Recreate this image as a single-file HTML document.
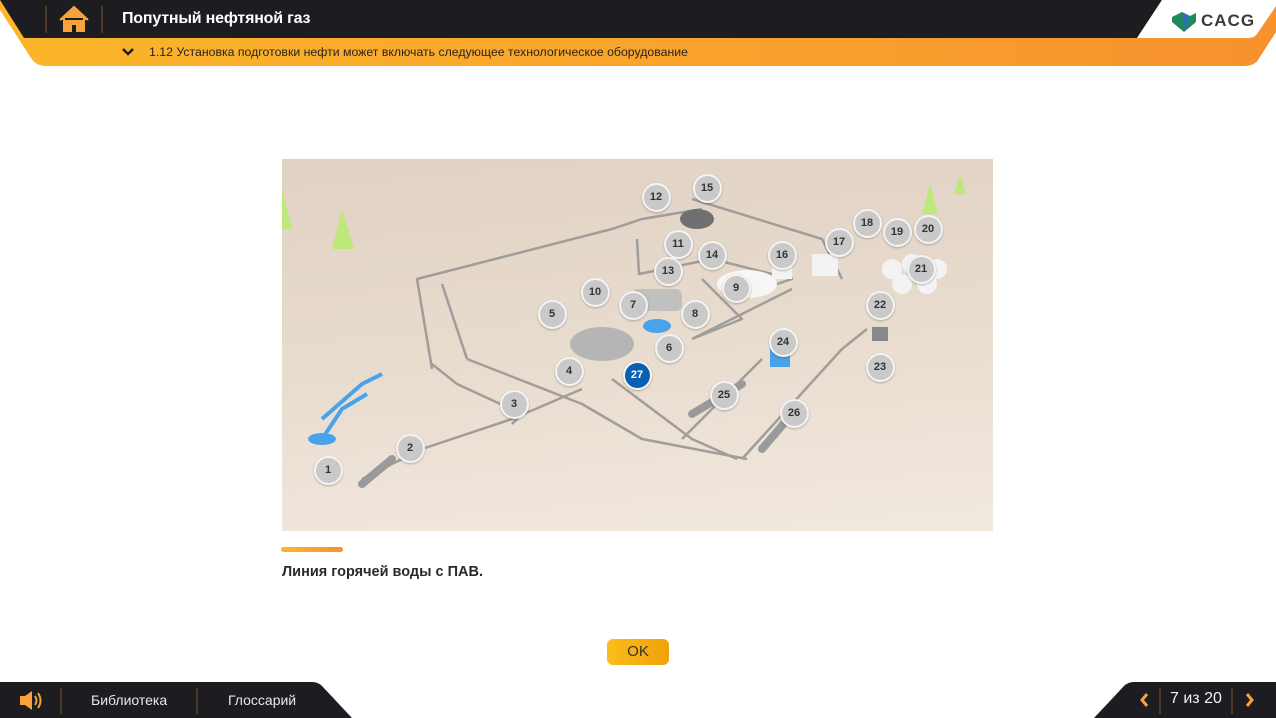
<!DOCTYPE html>
<html><head><meta charset="utf-8"><style>
*{margin:0;padding:0;box-sizing:border-box}
body{width:1276px;height:718px;overflow:hidden;background:#fff;font-family:"Liberation Sans",sans-serif;position:relative}
.a{position:absolute}
.c{position:absolute;width:29px;height:29px;margin:-14.5px 0 0 -14.5px;border-radius:50%;background:#c9c9c9;border:2px solid #f4f4f4;color:#333;font-size:11px;font-weight:bold;display:flex;align-items:center;justify-content:center;box-shadow:0 1px 2px rgba(0,0,0,.25)}
.c.b{background:#0a5fb0;color:#fff}
</style></head><body>
<svg class="a" style="left:0;top:0" width="1276" height="70">
<defs><linearGradient id="og" x1="0" x2="1"><stop offset="0" stop-color="#fbb62a"/><stop offset="1" stop-color="#f7922f"/></linearGradient></defs>
<path d="M0,0 L1276,0 L1276,32 L1258,60 Q1254,66 1244,66 L46,66 Q36,66 31,58 L0,10 Z" fill="url(#og)"/>
<path d="M0,0 L1162,0 L1137,38 L24,38 Z" fill="#1d1c21"/>
<path d="M1162,0 L1276,0 L1276,6 L1257,34 Q1254,38 1248,38 L1137,38 Z" fill="#fff"/>
<line x1="46" y1="6" x2="46" y2="33" stroke="#7a5a2a"/>
<line x1="102" y1="6" x2="102" y2="33" stroke="#7a5a2a"/>
<path d="M60,20 L74,7 L88,20 M64,18 V31 H71 V24 H77 V31 H84 V18" fill="#f7a23a" stroke="#f7a23a" stroke-width="2"/>
<path d="M123,49 L128,54 L133,49" fill="none" stroke="#1d1c21" stroke-width="2.5"/>
<path d="M1172,17 L1182,12 L1190,16 L1196,13 L1196,22 L1184,32 L1172,22 Z" fill="#1f8a5a"/>
<path d="M1182,12 L1190,16 L1184,32 Z" fill="#2f6fb0"/>
</svg>
<div class="a" style="left:122px;top:10px;color:#fff;font-size:16px;font-weight:bold;letter-spacing:-0.2px">Попутный нефтяной газ</div>
<div class="a" style="left:149px;top:45px;color:#2a2320;font-size:12.3px">1.12 Установка подготовки нефти может включать следующее технологическое оборудование</div>
<div class="a" style="left:1201px;top:11px;color:#3a3a3a;font-size:17px;font-weight:bold;letter-spacing:1px">CACG</div>

<div class="a" style="left:282px;top:159px;width:711px;height:372px;background:linear-gradient(175deg,#e0d2c4 0%,#e9ddd0 55%,#f2e9df 100%);overflow:hidden">
<svg width="711" height="372" style="position:absolute;left:0;top:0">
<g fill="none" stroke="#a09d9a" stroke-width="2.5" stroke-linejoin="round">
<polyline points="150,210 135,120 330,70 360,60 420,50"/>
<polyline points="175,225 150,205"/>
<polyline points="175,225 240,255 230,265"/>
<polyline points="185,200 160,125"/>
<polyline points="185,200 300,245 360,280 465,300"/>
<polyline points="80,320 140,290 230,260 300,230"/>
<polyline points="355,80 357,115 430,100 510,120 450,140"/>
<polyline points="410,40 540,80 560,120"/>
<polyline points="410,180 510,130"/>
<polyline points="400,280 480,200"/>
<polyline points="460,300 560,190 585,170"/>
<polyline points="330,220 410,280 455,300"/>
<polyline points="420,120 460,160 410,180"/>
</g>
<g stroke="#9a9a9a" stroke-width="8" stroke-linecap="round">
<line x1="80" y1="325" x2="110" y2="300"/><line x1="410" y1="255" x2="460" y2="225"/><line x1="480" y1="290" x2="510" y2="255"/>
</g>
<ellipse cx="320" cy="185" rx="32" ry="17" fill="#b5b5b5"/>
<ellipse cx="375" cy="167" rx="14" ry="7" fill="#4aa3e8"/>
<rect x="350" y="130" width="50" height="22" rx="6" fill="#c0c0c0"/>
<ellipse cx="465" cy="125" rx="30" ry="14" fill="#f6f6f6"/>
<ellipse cx="415" cy="60" rx="17" ry="10" fill="#707070"/>
<rect x="488" y="180" width="20" height="28" fill="#4aa3e8"/>
<rect x="490" y="90" width="20" height="30" fill="#f3f3f3"/>
<rect x="530" y="95" width="26" height="22" fill="#f3f3f3"/>
<g fill="#f3f3f3"><circle cx="610" cy="110" r="10"/><circle cx="630" cy="105" r="10"/><circle cx="655" cy="110" r="10"/><circle cx="620" cy="125" r="10"/><circle cx="645" cy="125" r="10"/></g>
<rect x="590" y="168" width="16" height="14" fill="#888"/>
<path d="M40,260 L80,225 L100,215 M40,280 L60,250 L85,235" stroke="#4aa3e8" stroke-width="4" fill="none"/>
<ellipse cx="40" cy="280" rx="14" ry="6" fill="#4aa3e8"/>
<g fill="#bfe87a"><path d="M60,50 L50,90 L72,90 Z"/><path d="M0,30 L-8,70 L10,70 Z"/><path d="M648,25 L640,55 L656,55 Z"/><path d="M678,15 L672,35 L684,35 Z"/></g>
</svg>
<div class="c" style="left:46px;top:311px">1</div>
<div class="c" style="left:128px;top:289px">2</div>
<div class="c" style="left:232px;top:245px">3</div>
<div class="c" style="left:287px;top:212px">4</div>
<div class="c" style="left:270px;top:155px">5</div>
<div class="c" style="left:387px;top:189px">6</div>
<div class="c" style="left:351px;top:146px">7</div>
<div class="c" style="left:413px;top:155px">8</div>
<div class="c" style="left:454px;top:129px">9</div>
<div class="c" style="left:313px;top:133px">10</div>
<div class="c" style="left:396px;top:85px">11</div>
<div class="c" style="left:374px;top:38px">12</div>
<div class="c" style="left:386px;top:112px">13</div>
<div class="c" style="left:430px;top:96px">14</div>
<div class="c" style="left:425px;top:29px">15</div>
<div class="c" style="left:500px;top:96px">16</div>
<div class="c" style="left:557px;top:83px">17</div>
<div class="c" style="left:585px;top:64px">18</div>
<div class="c" style="left:615px;top:73px">19</div>
<div class="c" style="left:646px;top:70px">20</div>
<div class="c" style="left:639px;top:110px">21</div>
<div class="c" style="left:598px;top:146px">22</div>
<div class="c" style="left:598px;top:208px">23</div>
<div class="c" style="left:501px;top:183px">24</div>
<div class="c" style="left:442px;top:236px">25</div>
<div class="c" style="left:512px;top:254px">26</div>
<div class="c b" style="left:355px;top:216px">27</div>
</div>

<div class="a" style="left:281px;top:547px;width:62px;height:5px;border-radius:3px;background:linear-gradient(90deg,#fbb62a,#f7922f)"></div>
<div class="a" style="left:282px;top:564px;font-size:14.5px;font-weight:bold;color:#2a2a2a">Линия горячей воды с ПАВ.</div>
<div class="a" style="left:607px;top:639px;width:62px;height:26px;border-radius:6px;background:linear-gradient(90deg,#fbbd1a,#f0a10a);color:#333;font-size:15px;text-align:center;line-height:26px">OK</div>

<svg class="a" style="left:0;top:682px" width="1276" height="36">
<path d="M0,0 L312,0 Q318,0 322,4 L352,36 L0,36 Z" fill="#1d1c21"/>
<path d="M1276,0 L1134,0 Q1128,0 1124,4 L1094,36 L1276,36 Z" fill="#1d1c21"/>
<line x1="61" y1="6" x2="61" y2="32" stroke="#7a5a2a"/>
<line x1="197" y1="6" x2="197" y2="32" stroke="#7a5a2a"/>
<line x1="1160" y1="6" x2="1160" y2="32" stroke="#7a5a2a"/>
<line x1="1232" y1="6" x2="1232" y2="32" stroke="#7a5a2a"/>
<path d="M20,14 H25 L32,9 V28 L25,23 H20 Z" fill="#f7a23a"/>
<path d="M35,14 Q38,18.5 35,23 M38,11 Q43,18.5 38,26" stroke="#f7a23a" stroke-width="2" fill="none"/>
<path d="M1147,12 L1142,18 L1147,24" stroke="#f7a23a" stroke-width="3" fill="none"/>
<path d="M1247,12 L1252,18 L1247,24" stroke="#f7a23a" stroke-width="3" fill="none"/>
</svg>
<div class="a" style="left:91px;top:692px;color:#e8e8e8;font-size:14px">Библиотека</div>
<div class="a" style="left:228px;top:692px;color:#e8e8e8;font-size:14px">Глоссарий</div>
<div class="a" style="left:1170px;top:690px;color:#f0f0f0;font-size:16px">7 из 20</div>
</body></html>
